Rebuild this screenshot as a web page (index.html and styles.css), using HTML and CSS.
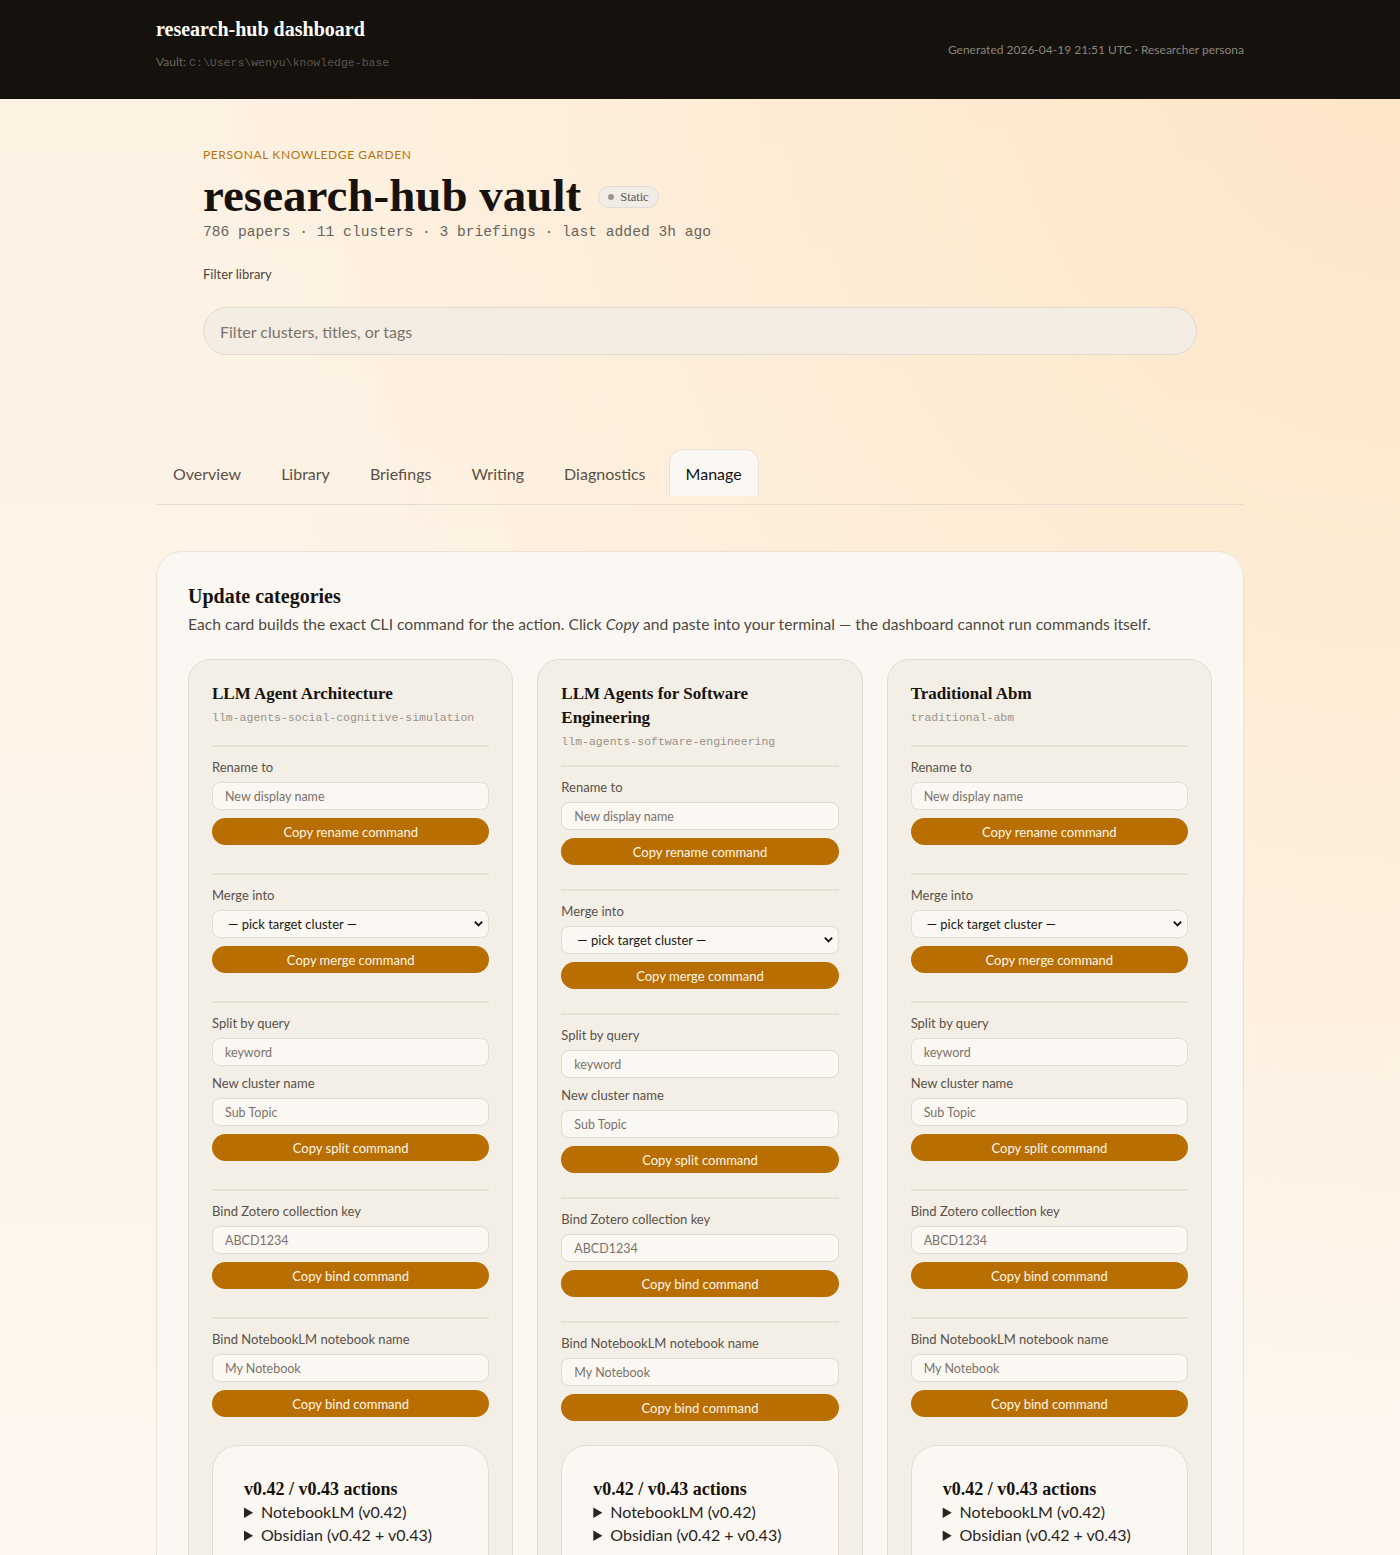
FILE: index.html
```html
<!DOCTYPE html>
<html lang="en">
<head>
    <meta charset="UTF-8">
    <meta name="viewport" content="width=device-width, initial-scale=1.0">
    <title>research-hub dashboard</title>
    <link rel="stylesheet" href="styles.css">
</head>
<body>
    <header class="topbar">
        <div class="wrap topbar-inner">
            <div class="topbar-left">
                <h1 class="brand">research-hub dashboard</h1>
                <p class="vault">Vault: <code>C:\Users\wenyu\knowledge-base</code></p>
            </div>
            <p class="generated">Generated 2026-04-19 21:51 UTC · Researcher persona</p>
        </div>
    </header>

    <main class="wrap">
        <section class="hero">
            <p class="eyebrow">Personal knowledge garden</p>
            <div class="title-row">
                <h2 class="vault-title">research-hub vault</h2>
                <span class="badge"><span class="dot"></span>Static</span>
            </div>
            <p class="stats">786 papers · 11 clusters · 3 briefings · last added 3h ago</p>
            <label class="filter-label" for="filter">Filter library</label>
            <input class="filter" type="search" id="filter" placeholder="Filter clusters, titles, or tags">
        </section>

        <nav class="tabs">
            <a href="#overview">Overview</a>
            <a href="#library">Library</a>
            <a href="#briefings">Briefings</a>
            <a href="#writing">Writing</a>
            <a href="#diagnostics">Diagnostics</a>
            <a href="#manage" class="active">Manage</a>
        </nav>

        <section class="panel" id="manage">
            <h3>Update categories</h3>
            <p class="lead">Each card builds the exact CLI command for the action. Click <em>Copy</em> and paste into your terminal — the dashboard cannot run commands itself.</p>

            <div class="card-grid" id="cards"></div>
        </section>
    </main>

    <template id="card-tpl">
        <article class="card">
            <div class="card-head">
                <h4 class="card-title"></h4>
                <code class="slug"></code>
            </div>
            <div class="action">
                <label>Rename to</label>
                <input type="text" placeholder="New display name">
                <button>Copy rename command</button>
            </div>
            <div class="action">
                <label>Merge into</label>
                <div class="select-wrap">
                    <select><option>— pick target cluster —</option></select>
                    <svg class="chevron" viewBox="0 0 12 12" width="11" height="11"><path d="M2 4l4 4 4-4" fill="none" stroke="#111" stroke-width="2"/></svg>
                </div>
                <button>Copy merge command</button>
            </div>
            <div class="action">
                <label>Split by query</label>
                <input type="text" placeholder="keyword">
                <label>New cluster name</label>
                <input type="text" placeholder="Sub Topic">
                <button>Copy split command</button>
            </div>
            <div class="action">
                <label>Bind Zotero collection key</label>
                <input type="text" placeholder="ABCD1234">
                <button>Copy bind command</button>
            </div>
            <div class="action">
                <label>Bind NotebookLM notebook name</label>
                <input type="text" placeholder="My Notebook">
                <button>Copy bind command</button>
            </div>
            <div class="extras">
                <h5>v0.42 / v0.43 actions</h5>
                <details><summary>NotebookLM (v0.42)</summary></details>
                <details><summary>Obsidian (v0.42 + v0.43)</summary></details>
            </div>
        </article>
    </template>

<script>
    // clusters shown on the manage tab
    const clusters = [
        { name: 'LLM Agent Architecture', slug: 'llm-agents-social-cognitive-simulation' },
        { name: 'LLM Agents for Software Engineering', slug: 'llm-agents-software-engineering' },
        { name: 'Traditional Abm', slug: 'traditional-abm' }
    ];

    const grid = document.getElementById('cards');
    const tpl = document.getElementById('card-tpl');

    clusters.forEach(function (c) {
        const card = tpl.content.cloneNode(true);
        card.querySelector('.card-title').textContent = c.name;
        card.querySelector('.slug').textContent = c.slug;
        grid.appendChild(card);
    });
</script>
</body>
</html>
```

FILE: styles.css
```css
body {
    margin: 0;
    font-family: Lato, "Noto Sans", sans-serif;
    color: #2b241d;
    background-color: #fdf5ea;
    background-image: radial-gradient(ellipse at 100% 0%, #fde5c6 0%, rgba(253, 229, 198, 0) 60%),
                      linear-gradient(180deg, #fdf1e1 0%, #fdf7f0 100%);
    min-height: 100vh;
}
.wrap {
    width: 1088px;
    margin: 0 auto;
}

/* top bar */
.topbar {
    background-color: #15110d;
    color: #fff;
    height: 99px;
}
.topbar-inner {
    display: flex;
    justify-content: space-between;
    align-items: center;
    height: 100%;
}
.topbar-left {
    padding-bottom: 13px;
}
.brand {
    font-family: "Liberation Serif", serif;
    font-size: 20px;
    margin: 0 0 14px;
    line-height: 22px;
}
.vault {
    margin: 0;
    font-size: 12px;
    color: #6d665e;
}
.vault code {
    font-family: "Liberation Mono", monospace;
    font-size: 11.5px;
    color: #5c564f;
}
.generated {
    margin: 0;
    font-size: 12px;
    color: #8b847b;
}

/* hero */
.hero {
    padding: 48px 47px 94px;
}
.eyebrow {
    margin: 0;
    font-size: 12px;
    line-height: 16px;
    letter-spacing: 0.6px;
    text-transform: uppercase;
    color: #b8730e;
}
.title-row {
    display: flex;
    align-items: center;
    gap: 17px;
    margin-top: 8px;
}
.vault-title {
    font-family: "Liberation Serif", serif;
    font-size: 47px;
    line-height: 48px;
    margin: 0;
    color: #17120d;
}
.badge {
    display: inline-flex;
    align-items: center;
    gap: 6px;
    height: 20px;
    padding: 0 9px;
    border-radius: 999px;
    border: 1px solid #e2dbd1;
    background-color: #f1ece5;
    font-family: "Liberation Serif", serif;
    font-size: 12.5px;
    color: #5a534b;
    margin-top: 4px;
}
.dot {
    width: 6px;
    height: 6px;
    border-radius: 50%;
    background-color: #9a948c;
}
.stats {
    margin: 5px 0 0;
    font-family: "Liberation Mono", monospace;
    font-size: 14.6px;
    color: #6a645d;
}
.filter-label {
    display: block;
    margin-top: 26px;
    font-size: 13px;
    color: #4d463f;
}
.filter {
    display: block;
    box-sizing: border-box;
    width: 100%;
    height: 48px;
    margin-top: 25px;
    padding: 0 16px;
    border: 1px solid #e2dace;
    border-radius: 999px;
    background-color: #f3ede4;
    font-family: inherit;
    font-size: 16px;
}
.filter::placeholder {
    color: #7a736b;
}

/* tabs */
.tabs {
    display: flex;
    gap: 6px;
    padding-bottom: 8px;
    border-bottom: 1px solid #e6ddd0;
}
.tabs a {
    display: flex;
    align-items: center;
    height: 46px;
    padding: 0 16px;
    border: 1px solid transparent;
    border-bottom: none;
    border-radius: 14px 14px 0 0;
    font-size: 16px;
    color: #5b5046;
    text-decoration: none;
}
.tabs a.active {
    background-color: #fbf8f3;
    border-color: #eae2d6;
    color: #111;
}

/* manage panel */
.panel {
    margin-top: 46px;
    padding: 32px 31px 40px;
    background-color: #fbf8f3;
    border: 1px solid #ebe2d5;
    border-radius: 26px;
}
.panel h3 {
    font-family: "Liberation Serif", serif;
    font-size: 20px;
    line-height: 24px;
    margin: 0;
    color: #17120d;
}
.lead {
    margin: 4px 0 0;
    font-size: 15.65px;
    line-height: 24px;
    color: #4f483f;
}
.card-grid {
    display: grid;
    grid-template-columns: repeat(3, 1fr);
    gap: 24px;
    margin-top: 23px;
}
.card {
    display: flex;
    flex-direction: column;
    justify-content: space-between;
    padding: 22px 23px 24px;
    background-color: #f3eee6;
    border: 1px solid #e4dcd0;
    border-radius: 22px;
}
.card-title {
    font-family: "Liberation Serif", serif;
    font-size: 17px;
    line-height: 24px;
    margin: 0;
    color: #17120d;
}
.slug {
    display: block;
    margin-top: 0;
    font-family: "Liberation Mono", monospace;
    font-size: 11.5px;
    line-height: 24px;
    color: #9a938a;
    padding-bottom: 11px;
}
.action {
    display: flex;
    flex-direction: column;
    border-top: 2px solid #e6dfd4;
    padding: 11px 0 24px;
}
.action label {
    font-size: 13px;
    line-height: 18px;
    color: #5a5249;
    margin-bottom: 6px;
}
.action input,
.action select {
    box-sizing: border-box;
    height: 28px;
    width: 100%;
    padding: 0 12px;
    border: 1px solid #e2dbd0;
    border-radius: 8px;
    background-color: #fbf8f3;
    font-family: inherit;
    font-size: 12.5px;
    color: #1d1813;
    margin-bottom: 8px;
}
.action input::placeholder {
    color: #7b726a;
}
.action input + label {
    margin-top: 0;
}
.select-wrap {
    position: relative;
}
.action select {
    appearance: none;
    padding-left: 15px;
    font-size: 13px;
}
.chevron {
    position: absolute;
    right: 5px;
    top: 8px;
}
.action button {
    height: 27px;
    border: none;
    border-radius: 999px;
    background-color: #b86e00;
    color: #fff6ea;
    font-family: inherit;
    font-size: 13px;
    cursor: pointer;
}
.action button:hover {
    background-color: #a36200;
}
.extras {
    margin-top: 0;
    padding: 32px 31px 40px;
    background-color: #fbf8f3;
    border: 1px solid #e4dcd0;
    border-radius: 26px;
}
.extras h5 {
    font-family: "Liberation Serif", serif;
    font-size: 18px;
    line-height: 22px;
    margin: 0;
    color: #17120d;
}
.extras summary {
    font-size: 16px;
    line-height: 23px;
    color: #2a241e;
    cursor: pointer;
}
```
